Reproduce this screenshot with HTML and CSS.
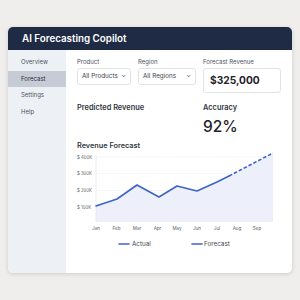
FILE: index.html
```html
<!DOCTYPE html>
<html lang="en">
<head>
    <meta charset="UTF-8">
    <title>AI Forecasting Copilot</title>
    <link rel="stylesheet" href="styles.css">
</head>
<body>

    <div class="app-card">
        <div class="app-header">AI Forecasting Copilot</div>

        <div class="app-body">
            <nav class="side-nav">
                <div class="nav-item">Overview</div>
                <div class="nav-item active">Forecast</div>
                <div class="nav-item">Settings</div>
                <div class="nav-item">Help</div>
            </nav>

            <main class="main-panel">
                <div class="filter-row">
                    <div class="field field-product">
                        <label>Product</label>
                        <div class="select-box">All Products <span class="chev">&#8964;</span></div>
                    </div>
                    <div class="field field-region">
                        <label>Region</label>
                        <div class="select-box">All Regions <span class="chev">&#8964;</span></div>
                    </div>
                    <div class="field field-revenue">
                        <label>Forecast Revenue</label>
                        <div class="value-box">$325,000</div>
                    </div>
                </div>

                <div class="stats-row">
                    <div class="stat-title">Predicted Revenue</div>
                    <div class="stat-acc">
                        <div class="stat-title">Accuracy</div>
                        <div class="stat-big">92%</div>
                    </div>
                </div>

                <div class="chart-title">Revenue Forecast</div>
                <svg class="chart" width="205" height="100" viewBox="0 0 205 100">
                    <g class="grid">
                        <line x1="19" y1="6" x2="196" y2="6"/>
                        <line x1="19" y1="22.5" x2="196" y2="22.5"/>
                        <line x1="19" y1="39.5" x2="196" y2="39.5"/>
                        <line x1="19" y1="56" x2="196" y2="56"/>
                    </g>
                    <polygon class="area" points="19,55 40,48 60,34 82,46 100,35 120,40 140,31 152,25 196,2 196,71 19,71"/>
                    <line class="axis" x1="19" y1="4" x2="19" y2="71"/>
                    <polyline class="line" points="19,55 40,48 60,34 82,46 100,35 120,40 140,31 152,25"/>
                    <line class="line dashed" x1="152" y1="25" x2="196" y2="2"/>
                    <g class="ylab">
                        <text x="0" y="7.5">$ 400K</text>
                        <text x="0" y="24">$ 300K</text>
                        <text x="0" y="41">$ 200K</text>
                        <text x="0" y="57.5">$ 100K</text>
                    </g>
                    <g class="xlab">
                        <text x="19" y="79">Jan</text>
                        <text x="39.5" y="79">Feb</text>
                        <text x="60" y="79">Mar</text>
                        <text x="80.5" y="79">Apr</text>
                        <text x="100" y="79">May</text>
                        <text x="120" y="79">Jun</text>
                        <text x="140" y="79">Jul</text>
                        <text x="160" y="79">Aug</text>
                        <text x="180" y="79">Sep</text>
                    </g>
                    <g class="legend">
                        <line class="line" x1="42" y1="93" x2="52" y2="93"/>
                        <text x="55" y="95.3">Actual</text>
                        <line class="line" x1="115" y1="93" x2="125" y2="93"/>
                        <text x="127" y="95.3">Forecast</text>
                    </g>
                </svg>
            </main>
        </div>
    </div>

</body>
</html>
```

FILE: styles.css
```css
body {
    margin: 0;
    padding: 27px 8px;
    background-color: #efeeec;
    font-family: Inter, 'Noto Sans', sans-serif;
    color: #2b2f36;
}

.app-card {
    height: 246px;
    background-color: #ffffff;
    border-radius: 5px;
    box-shadow: 0 1px 4px rgba(0, 0, 0, 0.15);
    overflow: hidden;
    display: flex;
    flex-direction: column;
}

.app-header {
    height: 23px;
    flex: none;
    background-color: #1f2b45;
    color: #ffffff;
    font-size: 9.8px;
    font-weight: 600;
    line-height: 24px;
    padding-left: 14px;
}

.app-body {
    flex: 1;
    display: flex;
}

/* left nav */
.side-nav {
    width: 58px;
    flex: none;
    background-color: #edf1f6;
    padding-top: 4px;
}

.nav-item {
    height: 16px;
    line-height: 16px;
    padding-left: 13px;
    font-size: 6px;
    color: #4d525c;
    margin-bottom: 0.5px;
}
.nav-item.active {
    background-color: #c6ccd6;
    color: #2c3140;
}

/* main area */
.main-panel {
    flex: 1;
    padding: 7px 0 0 11px;
}

.filter-row {
    display: flex;
    gap: 7px;
}

.field label {
    display: block;
    font-size: 6px;
    color: #4d525c;
    height: 11px;
    line-height: 9px;
}

.field-product { width: 54px; }
.field-region { width: 58px; }
.field-revenue { width: 78px; }

.select-box {
    height: 17px;
    border: 1px solid #e0e3e8;
    border-radius: 3px;
    box-sizing: border-box;
    font-size: 6.3px;
    line-height: 15px;
    padding: 0 4px;
    color: #3a3f48;
    display: flex;
    justify-content: space-between;
}
.chev {
    font-size: 6px;
    line-height: 11px;
}

.value-box {
    height: 25px;
    border: 1px solid #e0e3e8;
    border-radius: 3px;
    box-sizing: border-box;
    font-size: 10.2px;
    font-weight: 700;
    line-height: 23px;
    padding-left: 6px;
    color: #1f232a;
}

.stats-row {
    display: flex;
    margin-top: 9px;
}
.stats-row > .stat-title {
    width: 126px;
}

.stat-title {
    font-size: 7.4px;
    font-weight: 600;
    color: #33373f;
    line-height: 12px;
}

.stat-big {
    font-size: 15.5px;
    font-weight: 500;
    color: #1f232a;
    line-height: 22px;
    margin-top: 2px;
}

.chart-title {
    font-size: 7.3px;
    font-weight: 600;
    color: #33373f;
    line-height: 12px;
    margin-top: 2px;
}

.chart {
    display: block;
    margin-top: -1px;
}

.grid line {
    stroke: #e4e7ec;
    stroke-width: 0.6;
    stroke-dasharray: 1.5 1;
}
.axis {
    stroke: #e4e7ec;
    stroke-width: 0.8;
}
.area {
    fill: #edf0fb;
}
.line {
    fill: none;
    stroke: #3c65c6;
    stroke-width: 1.6;
    stroke-linejoin: round;
    stroke-linecap: round;
}
.line.dashed {
    stroke-dasharray: 3.5 2;
    stroke-linecap: butt;
}

.ylab text {
    font-size: 4.3px;
    fill: #5a5f68;
}
.xlab text {
    font-size: 4.6px;
    fill: #5a5f68;
    text-anchor: middle;
}
.legend text {
    font-size: 6.3px;
    fill: #444851;
}
```
